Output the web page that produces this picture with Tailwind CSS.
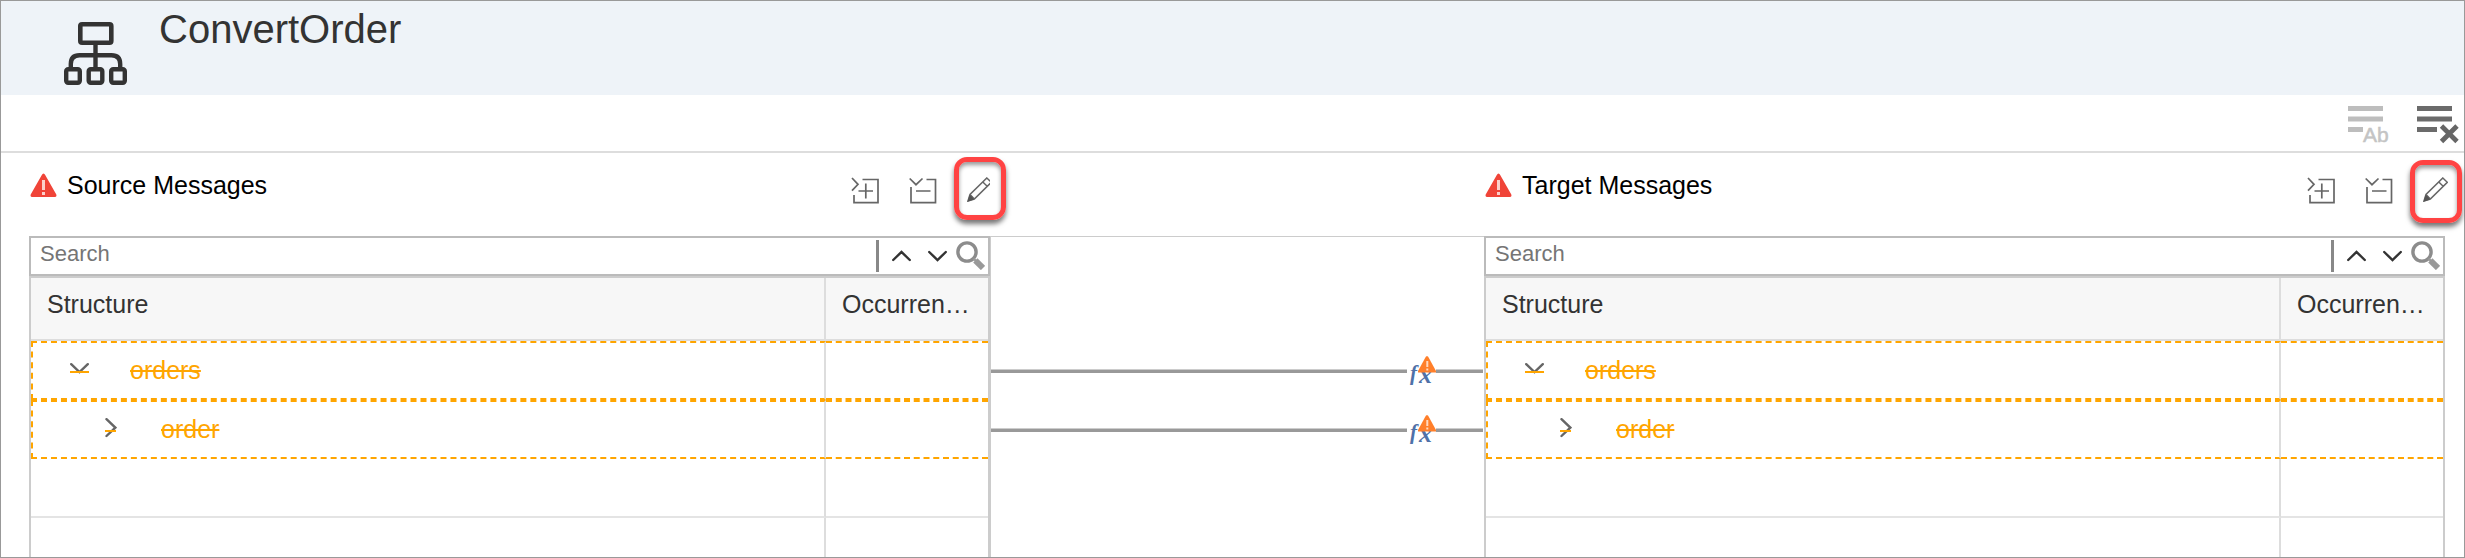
<!DOCTYPE html>
<html lang="en">
<head>
<meta charset="utf-8">
<title>ConvertOrder</title>
<script src="https://cdn.jsdelivr.net/npm/@tailwindcss/browser@4"></script>
</head>
<body class="bg-white font-['Liberation_Sans',Arial,sans-serif] text-[25px] leading-[37px] text-[#333]">
<svg class="hidden" aria-hidden="true">
  <symbol id="alert" viewBox="0 0 27 24">
    <path d="M13.5 0.5 Q14.5 0.5 15.2 2 L26.3 21.5 Q27 23.8 25 24 H2 Q0 23.8 0.7 21.5 L11.8 2 Q12.5 0.5 13.5 0.5Z" fill="#f04438"/>
    <path d="M12 7 H15 V17 H12Z M12 19 H15 V22 H12Z" fill="#fbd0cb"/>
  </symbol>
  <symbol id="expand" viewBox="0 0 28 27">
    <path d="M1 1 L7 7.3 L1 13.6 M11.5 2.5 H27 V25.7 H3 V18 M7.5 14 H22 M14.8 6.5 V21.5" fill="none" stroke="#666" stroke-width="1.7"/>
  </symbol>
  <symbol id="collapse" viewBox="0 0 28 27">
    <path d="M0.7 1.5 L7 7.7 L13.5 1.5 M17.5 2.5 H26.5 V25.7 H2 V10 M7 14 H21.5" fill="none" stroke="#666" stroke-width="1.7"/>
  </symbol>
  <symbol id="chev-up" viewBox="0 0 19 12">
    <path d="M1.2 10 L9.5 2 L17.8 10" fill="none" stroke="#333" stroke-width="2.4" stroke-linecap="round"/>
  </symbol>
  <symbol id="chev-down" viewBox="0 0 19 12">
    <path d="M1.2 2 L9.5 10 L17.8 2" fill="none" stroke="#333" stroke-width="2.4" stroke-linecap="round"/>
  </symbol>
  <symbol id="magnifier" viewBox="0 0 29 29">
    <circle cx="11" cy="11" r="9.1" fill="none" stroke="#8c8c8c" stroke-width="3.4"/>
    <path d="M19.3 19.3 L27 27" stroke="#999" stroke-width="6"/>
    <path d="M17.5 17.5 L20 20" stroke="#999" stroke-width="2.4"/>
  </symbol>
  <symbol id="struck-down" viewBox="0 0 19 21">
    <path d="M1.2 4.2 L9.5 12.2 L17.8 4.2" fill="none" stroke="#666" stroke-width="2.4" stroke-linecap="round"/>
    <path d="M0 12 H19" stroke="orange" stroke-width="2"/>
  </symbol>
  <symbol id="struck-right" viewBox="0 0 12 23">
    <path d="M1.5 1.2 L10.3 9.6 L1.5 18" fill="none" stroke="#666" stroke-width="2.4" stroke-linecap="round"/>
    <path d="M0 13 H11" stroke="orange" stroke-width="2"/>
  </symbol>
  <symbol id="fx" viewBox="0 0 29 29">
    <text x="3" y="24" font-family="Liberation Serif, serif" font-style="italic" font-weight="bold" font-size="21" fill="#4f71a8">f</text>
    <text x="12" y="27" font-family="Liberation Serif, serif" font-style="italic" font-weight="bold" font-size="26" fill="#4f71a8">x</text>
    <path d="M20 0 L21.2 0.8 L29 15 V16.5 H11 V15 L18.8 0.8Z" fill="#ff7f2a"/>
    <path d="M19.3 5 H21.3 V11 H19.3Z M19.3 12.5 H21.3 V14.5 H19.3Z" fill="#ffd9bf"/>
  </symbol>
</svg>

<div class="flex min-h-screen flex-col border border-[#999]">
  <header class="flex h-[94px] items-start gap-8 bg-[#eef3f8] pl-[63px]">
    <svg class="mt-[21px] size-[63px] shrink-0" viewBox="0 0 63 63" fill="none" stroke="#333" aria-hidden="true">
      <rect x="16.3" y="2.3" width="31" height="18.4" rx="1.8" stroke-width="4.6"/>
      <path d="M31.5 22 V46 M6.8 46 V42 Q6.8 33.3 15.5 33.3 H47.5 Q56.2 33.3 56.2 42 V46" stroke-width="4.4"/>
      <rect x="2.2" y="47.2" width="13.6" height="13.6" rx="2" stroke-width="4.4"/>
      <rect x="24.7" y="47.2" width="13.6" height="13.6" rx="2" stroke-width="4.4"/>
      <rect x="47.2" y="47.2" width="13.6" height="13.6" rx="2" stroke-width="4.4"/>
    </svg>
    <h1 class="mt-1 text-[40px] leading-12">ConvertOrder</h1>
  </header>

  <div class="flex h-[58px] items-start justify-end gap-[25px] border-b-2 border-[#ddd] pt-[10px] pr-[5px]" role="toolbar" aria-label="Mapping tools">
    <button type="button" aria-label="Show descriptions">
      <svg class="h-[40px] w-[44px]" viewBox="0 0 44 40">
        <path d="M0 1 H35 V6 H0Z M0 11.5 H35 V16.5 H0Z M0 22 H15 V27 H0Z" fill="#bdbdbd"/>
        <text x="15" y="37" font-family="Liberation Sans, sans-serif" font-size="21" fill="#c4c4c4" stroke="#c4c4c4" stroke-width="0.5">Ab</text>
      </svg>
    </button>
    <button type="button" aria-label="Clear mappings">
      <svg class="h-[40px] w-[42px]" viewBox="0 0 42 40">
        <path d="M0 1 H35 V6 H0Z M0 11.5 H35 V16.5 H0Z M0 22 H20 V27 H0Z" fill="#6b6b6b"/>
        <path d="M24.5 21 L40 36.5 M40 21 L24.5 36.5" stroke="#666" stroke-width="4.8"/>
      </svg>
    </button>
  </div>

  <main class="flex grow items-stretch pr-[19px] pl-7">
    <section class="flex min-w-0 flex-1 flex-col" aria-labelledby="source-title">
      <div class="flex h-[83px] items-start justify-between pt-4">
        <div class="flex h-8 items-center gap-[10px] pl-px">
          <svg class="h-[24px] w-[27px]" aria-hidden="true"><use href="#alert"/></svg>
          <h2 id="source-title" class="text-black">Source Messages</h2>
        </div>
        <div class="flex gap-[30px] pt-2">
          <button type="button" aria-label="Expand all"><svg class="h-[27px] w-[28px]"><use href="#expand"/></svg></button>
          <button type="button" aria-label="Collapse all"><svg class="h-[27px] w-[28px]"><use href="#collapse"/></svg></button>
          <button type="button" aria-label="Edit source message" class="relative">
            <svg class="mb-[2px] h-[25px] w-[23px]" viewBox="0 0 23 25">
              <path d="M1 24 L3 17.5 L19.8 1 L24.3 5.3 L7.3 22 Z M15.8 5 L20.2 9.3 M3 17.5 L7.3 22" fill="none" stroke="#666" stroke-width="1.5"/>
              <path d="M0.5 24.8 L2.5 18 Q5.5 19 7 22.5Z" fill="#555"/>
            </svg>
            <span class="absolute -top-5 -left-[13px] h-[63px] w-[52px] rounded-[13px] border-5 border-[#ff4343] shadow-[0_4px_5px_#0008,inset_0_3px_4px_#0006]"></span>
          </button>
        </div>
      </div>
      <div class="flex h-10 items-center border-2 border-[#bbb] pr-[3px] pb-px" role="search">
        <input type="text" placeholder="Search" aria-label="Search source structure" class="h-full min-w-0 flex-1 pb-[3px] pl-[9px] text-[22px] outline-none placeholder:text-[#757575]">
        <span class="mr-[13px] h-8 w-[3px] bg-[#888]"></span>
        <button type="button" aria-label="Previous match" class="mr-[17px]"><svg class="h-[12px] w-[19px]"><use href="#chev-up"/></svg></button>
        <button type="button" aria-label="Next match" class="mr-[9px]"><svg class="h-[12px] w-[19px]"><use href="#chev-down"/></svg></button>
        <button type="button" aria-label="Search source"><svg class="size-[29px]"><use href="#magnifier"/></svg></button>
      </div>
      <div class="grow border-x-2 border-t-2 border-[#ccc]">
        <table class="w-full table-fixed border-separate border-spacing-0 text-left">
          <colgroup><col><col class="w-[162px]"></colgroup>
          <thead>
            <tr class="h-[63px] bg-[#f7f7f7]">
              <th scope="col" class="border-r-2 border-b-2 border-[#ddd] p-0 pb-2 pl-4 font-normal">Structure</th>
              <th scope="col" class="truncate border-b-2 border-[#ddd] p-0 pr-4 pb-2 pl-4 font-normal">Occurrences</th>
            </tr>
          </thead>
          <tbody>
            <tr class="h-[59px]">
              <td class="border-2 border-dashed border-[orange] border-r-[#ddd] p-0 [border-right-style:solid]">
                <div class="flex items-center gap-[41px] pl-[37px]">
                  <button type="button" aria-label="Collapse orders"><svg class="h-[21px] w-[19px]"><use href="#struck-down"/></svg></button>
                  <s class="text-[orange] decoration-2">orders</s>
                </div>
              </td>
              <td class="border-y-2 border-dashed border-[orange] p-0"></td>
            </tr>
            <tr class="h-[59px]">
              <td class="border-2 border-dashed border-[orange] border-r-[#ddd] p-0 [border-right-style:solid]">
                <div class="flex items-center gap-[44px] pl-[72px]">
                  <button type="button" aria-label="Expand order"><svg class="h-[23px] w-[12px]"><use href="#struck-right"/></svg></button>
                  <s class="text-[orange] decoration-2">order</s>
                </div>
              </td>
              <td class="border-y-2 border-dashed border-[orange] p-0"></td>
            </tr>
            <tr class="h-[59px]">
              <td class="border-r-2 border-b-2 border-r-[#ddd] border-b-[#e4e4e4] p-0"></td>
              <td class="border-b-2 border-[#e4e4e4] p-0"></td>
            </tr>
            <tr class="h-[39px]">
              <td class="border-r-2 border-[#ddd] p-0"></td>
              <td class="p-0"></td>
            </tr>
          </tbody>
        </table>
      </div>
    </section>

    <div class="mt-[83px] flex w-[494px] shrink-0 flex-col border-t border-l border-[#ccc] pt-[104px] pr-px" aria-label="Mapping expressions">
      <div class="flex h-[59px] items-center">
        <span class="h-1 flex-1 border-t border-[#ccc] bg-[#999]"></span>
        <button type="button" aria-label="Expression for orders"><svg class="size-[29px]"><use href="#fx"/></svg></button>
        <span class="h-1 w-[47px] border-t border-[#ccc] bg-[#999]"></span>
      </div>
      <div class="flex h-[59px] items-center">
        <span class="h-1 flex-1 border-t border-[#ccc] bg-[#999]"></span>
        <button type="button" aria-label="Expression for order"><svg class="size-[29px]"><use href="#fx"/></svg></button>
        <span class="h-1 w-[47px] border-t border-[#ccc] bg-[#999]"></span>
      </div>
    </div>

    <section class="flex min-w-0 flex-1 flex-col" aria-labelledby="target-title">
      <div class="flex h-[83px] items-start justify-between pt-4">
        <div class="flex h-8 items-center gap-[10px] pl-px">
          <svg class="h-[24px] w-[27px]" aria-hidden="true"><use href="#alert"/></svg>
          <h2 id="target-title" class="text-black">Target Messages</h2>
        </div>
        <div class="-mr-[3px] flex gap-[30px] pt-2">
          <button type="button" aria-label="Expand all"><svg class="h-[27px] w-[28px]"><use href="#expand"/></svg></button>
          <button type="button" aria-label="Collapse all"><svg class="h-[27px] w-[28px]"><use href="#collapse"/></svg></button>
          <button type="button" aria-label="Edit target message" class="relative">
            <svg class="mb-[2px] h-[25px] w-[25px]" viewBox="0 0 25 25">
              <path d="M1 24 L3 17.5 L19.8 1 L24.3 5.3 L7.3 22 Z M15.8 5 L20.2 9.3 M3 17.5 L7.3 22" fill="none" stroke="#666" stroke-width="1.5"/>
              <path d="M0.5 24.8 L2.5 18 Q5.5 19 7 22.5Z" fill="#555"/>
            </svg>
            <span class="absolute -top-[17px] -left-[13px] h-[63px] w-[52px] rounded-[13px] border-5 border-[#ff4343] shadow-[0_4px_5px_#0008,inset_0_3px_4px_#0006]"></span>
          </button>
        </div>
      </div>
      <div class="flex h-10 items-center border-2 border-[#bbb] pr-[3px] pb-px" role="search">
        <input type="text" placeholder="Search" aria-label="Search target structure" class="h-full min-w-0 flex-1 pb-[3px] pl-[9px] text-[22px] outline-none placeholder:text-[#757575]">
        <span class="mr-[13px] h-8 w-[3px] bg-[#888]"></span>
        <button type="button" aria-label="Previous match" class="mr-[17px]"><svg class="h-[12px] w-[19px]"><use href="#chev-up"/></svg></button>
        <button type="button" aria-label="Next match" class="mr-[9px]"><svg class="h-[12px] w-[19px]"><use href="#chev-down"/></svg></button>
        <button type="button" aria-label="Search target"><svg class="size-[29px]"><use href="#magnifier"/></svg></button>
      </div>
      <div class="grow border-x-2 border-t-2 border-[#ccc]">
        <table class="w-full table-fixed border-separate border-spacing-0 text-left">
          <colgroup><col><col class="w-[162px]"></colgroup>
          <thead>
            <tr class="h-[63px] bg-[#f7f7f7]">
              <th scope="col" class="border-r-2 border-b-2 border-[#ddd] p-0 pb-2 pl-4 font-normal">Structure</th>
              <th scope="col" class="truncate border-b-2 border-[#ddd] p-0 pr-4 pb-2 pl-4 font-normal">Occurrences</th>
            </tr>
          </thead>
          <tbody>
            <tr class="h-[59px]">
              <td class="border-2 border-dashed border-[orange] border-r-[#ddd] p-0 [border-right-style:solid]">
                <div class="flex items-center gap-[41px] pl-[37px]">
                  <button type="button" aria-label="Collapse orders"><svg class="h-[21px] w-[19px]"><use href="#struck-down"/></svg></button>
                  <s class="text-[orange] decoration-2">orders</s>
                </div>
              </td>
              <td class="border-y-2 border-dashed border-[orange] p-0"></td>
            </tr>
            <tr class="h-[59px]">
              <td class="border-2 border-dashed border-[orange] border-r-[#ddd] p-0 [border-right-style:solid]">
                <div class="flex items-center gap-[44px] pl-[72px]">
                  <button type="button" aria-label="Expand order"><svg class="h-[23px] w-[12px]"><use href="#struck-right"/></svg></button>
                  <s class="text-[orange] decoration-2">order</s>
                </div>
              </td>
              <td class="border-y-2 border-dashed border-[orange] p-0"></td>
            </tr>
            <tr class="h-[59px]">
              <td class="border-r-2 border-b-2 border-r-[#ddd] border-b-[#e4e4e4] p-0"></td>
              <td class="border-b-2 border-[#e4e4e4] p-0"></td>
            </tr>
            <tr class="h-[39px]">
              <td class="border-r-2 border-[#ddd] p-0"></td>
              <td class="p-0"></td>
            </tr>
          </tbody>
        </table>
      </div>
    </section>
  </main>
</div>
</body>
</html>
